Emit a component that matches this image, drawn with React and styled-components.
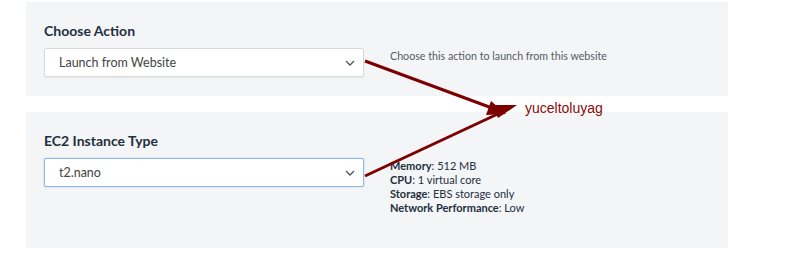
import React from 'react'
import styled, { createGlobalStyle } from 'styled-components'

const MAROON = '#7d0000'

const GlobalStyle = createGlobalStyle`
  html, body {
    margin: 0;
    padding: 0;
    background: #ffffff;
    font-family: Lato, 'Open Sans', 'Liberation Sans', sans-serif;
  }
`

const Page = styled.div`
  position: relative;
  width: 800px;
  height: 260px;
  padding: 2px 0 0 26px;
  box-sizing: border-box;
  display: flex;
  flex-direction: column;
  gap: 16px;
`

const Panel = styled.section`
  width: 702px;
  height: ${(p) => p.height}px;
  box-sizing: border-box;
  background: #f4f5f6;
  padding: 19px 18px;
  display: flex;
  flex-direction: row;
  gap: 26px;
`

const FieldColumn = styled.div`
  width: 320px;
  display: flex;
  flex-direction: column;
  gap: 7px;
`

const Label = styled.div`
  font-size: 14px;
  line-height: 20px;
  font-weight: 700;
  color: #232f3e;
`

const Select = styled.div`
  height: 29px;
  box-sizing: border-box;
  background: #fff;
  border: 1px solid ${(p) => (p.focused ? '#8fb8e6' : '#d5dbdb')};
  border-radius: 2px;
  box-shadow: ${(p) =>
    p.focused ? '0 0 2px rgba(80,150,230,0.4)' : '0 1px 1px rgba(0,0,0,0.06)'};
  display: flex;
  align-items: center;
  justify-content: space-between;
  padding: 0 8px 0 14px;
  font-size: 12.5px;
  color: #444;
`

const Chevron = () => (
  <svg width="10" height="6" viewBox="0 0 10 6">
    <path d="M1 1 L5 5 L9 1" fill="none" stroke="#555" strokeWidth="1.3" />
  </svg>
)

const Help = styled.div`
  padding-top: ${(p) => p.offset || 0}px;
  font-size: ${(p) => p.size || 11}px;
  line-height: ${(p) => p.lh || 16}px;
  color: #545b64;
`

const InfoLine = styled.div`
  color: #232f3e;
  b {
    font-weight: 700;
  }
`

const Overlay = styled.svg`
  position: absolute;
  left: 0;
  top: 0;
  pointer-events: none;
`

const Signature = styled.div`
  position: absolute;
  left: 525px;
  top: 98px;
  font-family: 'Liberation Sans', Arial, sans-serif;
  font-size: 14px;
  line-height: 20px;
  color: #8a0a0a;
`

const specs = [
  ['Memory', '512 MB'],
  ['CPU', '1 virtual core'],
  ['Storage', 'EBS storage only'],
  ['Network Performance', 'Low'],
]

export default function App() {
  return (
    <>
      <GlobalStyle />
      <Page>
        <Panel height={94}>
          <FieldColumn>
            <Label>Choose Action</Label>
            <Select>
              <span>Launch from Website</span>
              <Chevron />
            </Select>
          </FieldColumn>
          <Help offset={27} size={10.7}>
            Choose this action to launch from this website
          </Help>
        </Panel>
        <Panel height={136}>
          <FieldColumn>
            <Label>EC2 Instance Type</Label>
            <Select focused>
              <span>t2.nano</span>
              <Chevron />
            </Select>
          </FieldColumn>
          <Help offset={28} lh={14}>
            {specs.map(([k, v]) => (
              <InfoLine key={k}>
                <b>{k}</b>: {v}
              </InfoLine>
            ))}
          </Help>
        </Panel>
        <Overlay width="800" height="260" viewBox="0 0 800 260">
          <line x1="365" y1="61" x2="492" y2="108" stroke={MAROON} strokeWidth="3" />
          <polygon points="506,114 486,115 491,101" fill={MAROON} />
          <line x1="365" y1="176" x2="502" y2="112" stroke={MAROON} strokeWidth="3" />
          <polygon points="517,105 498,118 492,105" fill={MAROON} />
        </Overlay>
        <Signature>yuceltoluyag</Signature>
      </Page>
    </>
  )
}
